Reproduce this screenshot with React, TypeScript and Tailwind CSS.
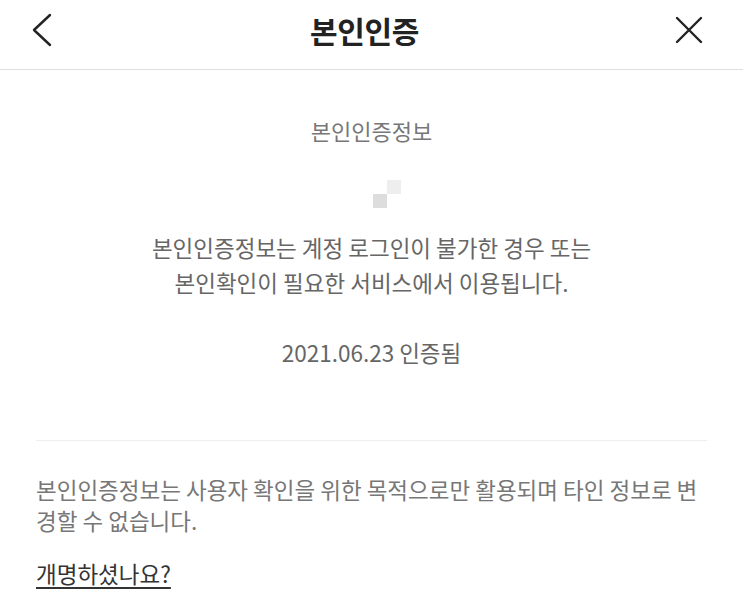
import React from 'react';

const font = { fontFamily: '"Noto Sans CJK KR", "Noto Sans", sans-serif' };

const App: React.FC = () => {
  return (
    <div className="min-h-screen w-full bg-white" style={font}>
      <header className="flex h-[70px] items-center justify-between border-b border-[#dedede] pb-[10px] pl-[30px] pr-[40px]">
        <button className="flex h-[40px] w-[24px] items-center justify-center">
          <svg width="22" height="34" viewBox="0 0 22 34" fill="none">
            <path d="M19 2 L3 17 L19 32" stroke="#222" strokeWidth="2.4" strokeLinecap="round" strokeLinejoin="round" />
          </svg>
        </button>
        <h1 className="text-[30px] font-bold leading-none tracking-[-0.3px] text-[#222]">본인인증</h1>
        <button className="flex h-[40px] w-[28px] items-center justify-center">
          <svg width="28" height="28" viewBox="0 0 28 28" fill="none">
            <path d="M2 2 L26 26 M26 2 L2 26" stroke="#222" strokeWidth="2.4" strokeLinecap="round" />
          </svg>
        </button>
      </header>

      <main className="px-[36px]">
        <section className="flex flex-col items-center pt-[45px] text-center">
          <h2 className="text-[22px] leading-[30px] text-[#777]">본인인증정보</h2>
          <div className="ml-[30px] mt-[35px] grid h-[28px] w-[28px] grid-cols-2 grid-rows-2">
            <span />
            <span className="bg-[#eeeeee]" />
            <span className="bg-[#dddddd]" />
            <span />
          </div>
          <p className="mt-[22px] text-[22.5px] leading-[35px] text-[#666]">
            본인인증정보는 계정 로그인이 불가한 경우 또는
            <br />
            본인확인이 필요한 서비스에서 이용됩니다.
          </p>
          <p className="mt-[35px] text-[22.5px] leading-[35px] text-[#666]">2021.06.23 인증됨</p>
        </section>

        <div className="mt-[70px] border-t border-[#eeeeee]" />

        <section className="pt-[33px]">
          <p className="break-all text-[22.5px] leading-[31px] text-[#777]">
            본인인증정보는 사용자 확인을 위한 목적으로만 활용되며 타인 정보로 변경할 수 없습니다.
          </p>
          <a className="mt-[22px] inline-block text-[22.5px] leading-[31px] text-[#333] underline underline-offset-[4px]">
            개명하셨나요?
          </a>
        </section>
      </main>
    </div>
  );
};

export default App;
